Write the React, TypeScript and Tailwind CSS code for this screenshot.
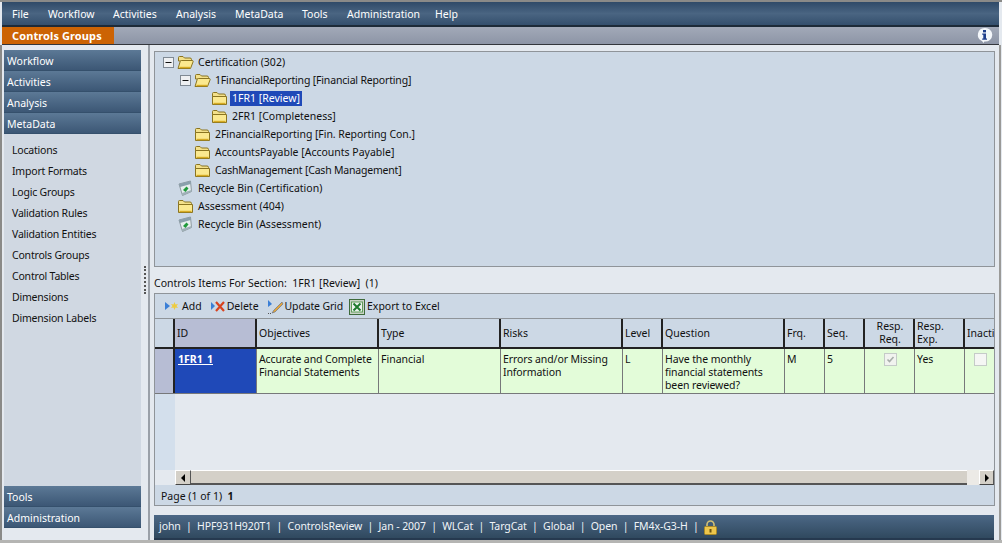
import React from "react";

const Folder = ({ open }: { open?: boolean }) => (
  <svg width="17" height="15" viewBox="0 0 17 15" className="shrink-0">
    <path d="M1.5 5V2.5Q1.5 1.5 2.5 1.5H6L7.5 3H13Q14.5 3 14.5 4.5V6H1.5Z" fill="#f3e08a" stroke="#8a7420" />
    <path d={open ? "M1 13.5H13.5L16.2 6.5Q16.3 5.5 15 5.5H4.5Q3.5 5.5 3.2 6.5Z" : "M1.5 13.5H15.5V5.5H1.5Z"} fill="#fbe98f" stroke="#8a7420" />
    <path d={open ? "M2.5 12.5H13" : "M2.5 12.5H14.5"} stroke="#d7ab23" strokeWidth="1.4" />
  </svg>
);

const Minus = () => (
  <svg width="11" height="11" viewBox="0 0 11 11" className="shrink-0">
    <rect x=".5" y=".5" width="10" height="10" fill="#eef0f2" stroke="#808a94" />
    <path d="M2.5 5.5H8.5" stroke="#111" />
  </svg>
);

const Bin = () => (
  <svg width="15" height="16" viewBox="0 0 15 16" className="shrink-0">
    <path d="M1 4L12.5 1L13.5 11.5L4.5 15.5L1 4Z" fill="#e6eeee" stroke="#8d99a0" />
    <path d="M1 4L12.5 1L12.8 4L2 7Z" fill="#8aa0ac" />
    <path d="M4.5 15.5L13.5 11.5V10L4 13Z" fill="#9fb0b8" />
    <path d="M5 10L8.5 6.5L10.5 8.5L7.5 12Z" fill="#1f9a3a" />
  </svg>
);

const TreeRow = ({ depth, icon, text, minus, selected, cls = "" }: { depth: string; icon: React.ReactNode; text: string; minus?: boolean; selected?: boolean; cls?: string }) => (
  <div className={`h-[18px] flex items-center ${depth}`}>
    <div className="w-[14px] flex items-center">{minus && <Minus />}</div>
    <div className="w-[17px] flex justify-center">{icon}</div>
    <span className={`ml-[2px] px-[2px] h-[15px] leading-[15px] ${cls} ${selected ? "bg-[#1f49b8] text-white" : ""}`}>{text}</span>
  </div>
);

const SideHead = ({ t }: { t: string }) => (
  <div className="h-[21px] leading-[21px] pl-[3px] pt-[1px] text-white bg-gradient-to-b from-[#5c7996] to-[#3c5775] border-b border-[#35506c]">{t}</div>
);

const cols = [
  { t: "ID", w: "w-[82px]", cls: "bg-[#b7bdd4]" },
  { t: "Objectives", w: "w-[122px]" },
  { t: "Type", w: "w-[122px]" },
  { t: "Risks", w: "w-[122px]" },
  { t: "Level", w: "w-[40px]" },
  { t: "Question", w: "w-[122px]" },
  { t: "Frq.", w: "w-[40px]" },
  { t: "Seq.", w: "w-[40px]" },
  { t: "Resp.\nReq.", w: "w-[50px]", center: true },
  { t: "Resp.\nExp.", w: "w-[50px]" },
  { t: "Inacti", w: "w-[29px]" },
];

const Cell = ({ w, children, cls = "" }: { w: string; children?: React.ReactNode; cls?: string }) => (
  <div className={`${w} shrink-0 border-r border-[#77787a] pl-[2px] pt-[4px] leading-[13px] overflow-hidden ${cls}`}>{children}</div>
);

export default function App() {
  const menu: [string, string][] = [["File", "w-[36px]"], ["Workflow", "w-[65px]"], ["Activities", "w-[63px]"], ["Analysis", "w-[59px]"], ["MetaData", "w-[67px]"], ["Tools", "w-[45px]"], ["Administration", "w-[88px]"], ["Help", "w-[40px]"]];
  const links = ["Locations", "Import Formats", "Logic Groups", "Validation Rules", "Validation Entities", "Controls Groups", "Control Tables", "Dimensions", "Dimension Labels"];
  const status = ["john", "HPF931H920T1", "ControlsReview", "Jan - 2007", "WLCat", "TargCat", "Global", "Open", "FM4x-G3-H"];
  return (
    <div className="w-[1002px] h-[543px] overflow-hidden bg-[#e4e9ef] text-[#111] text-[10.5px] flex flex-col" style={{ fontFamily: '"Noto Sans", "DejaVu Sans", sans-serif' }}>
      <div className="h-[2px] bg-[#8a8a88] shrink-0" />
      <div className="h-[25px] ml-[2px] mr-[3px] shrink-0 flex items-center pl-[10px] pt-[3px] text-white bg-gradient-to-b from-[#2f4a68] via-[#4a6582] to-[#344f6d] border-b-2 border-[#1d2a38]">
        {menu.map(([m, w]) => <div key={m} className={w}>{m}</div>)}
      </div>
      <div className="h-[18px] ml-[2px] mr-[3px] shrink-0 flex justify-between bg-gradient-to-b from-[#a2a9b8] to-[#8d95a6] border-b border-[#33363c]">
        <div className="w-[112px] bg-[#cc6304] text-white font-bold text-[11px] tracking-[0.1px] pl-[10px] leading-[17px]">Controls Groups</div>
        <svg width="17" height="17" viewBox="0 0 17 17" className="mr-[6px]">
          <path d="M8.5 1A7 6.8 0 1 1 8.4 14.5L7.5 16L6 14A7 6.8 0 0 1 8.5 1Z" fill="#f4f7fb" />
          <rect x="7" y="3" width="3" height="2.4" fill="#1f3f8c" />
          <path d="M6.2 6.5H10V11.5H11V12.8H6.2V11.5H7.3V7.8H6.2Z" fill="#1f3f8c" />
        </svg>
      </div>
      <div className="h-[495px] shrink-0 flex border-l-2 border-[#8a8a88] border-r-2 border-r-[#9a9a98] mr-[1px]">
        <div className="w-[139px] shrink-0 pl-[2px] pt-[5px] pb-[12px]">
          <div className="bg-[#d0d8e2] h-full flex flex-col">
            <SideHead t="Workflow" /><SideHead t="Activities" /><SideHead t="Analysis" /><SideHead t="MetaData" />
            <div className="flex-1 pl-[8px] pt-[6px] tracking-[-0.2px]">
              {links.map(l => <div key={l} className="h-[21px] leading-[21px]">{l}</div>)}
            </div>
            <SideHead t="Tools" /><SideHead t="Administration" />
          </div>
        </div>
        <div className="w-[7px] shrink-0 flex items-center justify-center bg-[#e4e9ef]">
          <div className="h-[28px] w-[2px] mt-[-26px] border-l-2 border-dotted border-[#555]" />
        </div>
        <div className="w-[2px] bg-[#9aa0a8] shrink-0" />
        <div className="flex-1 min-w-0 pl-[4px] pt-[6px] flex flex-col">
          <div className="h-[216px] w-[841px] shrink-0 bg-[#ccd8e5] border border-[#8f9499] pl-[8px] pt-[1px]">
            <TreeRow depth="" minus icon={<Folder open />} text="Certification (302)" />
            <TreeRow depth="pl-[17px]" minus icon={<Folder open />} text="1FinancialReporting [Financial Reporting]" cls="tracking-[-0.17px]" />
            <TreeRow depth="pl-[34px]" icon={<Folder />} text="1FR1 [Review]" selected />
            <TreeRow depth="pl-[34px]" icon={<Folder />} text="2FR1 [Completeness]" />
            <TreeRow depth="pl-[17px]" icon={<Folder />} text="2FinancialReporting [Fin. Reporting Con.]" cls="tracking-[-0.06px]" />
            <TreeRow depth="pl-[17px]" icon={<Folder />} text="AccountsPayable [Accounts Payable]" />
            <TreeRow depth="pl-[17px]" icon={<Folder />} text="CashManagement [Cash Management]" cls="tracking-[-0.2px]" />
            <TreeRow depth="" icon={<Bin />} text="Recycle Bin (Certification)" />
            <TreeRow depth="" icon={<Folder />} text="Assessment (404)" />
            <TreeRow depth="" icon={<Bin />} text="Recycle Bin (Assessment)" />
          </div>
          <div className="h-[26px] shrink-0 pt-[9px] leading-[14px] whitespace-pre">Controls Items For Section:  1FR1 [Review]  (1)</div>
          <div className="h-[213px] w-[841px] shrink-0 border border-[#8f9499] bg-[#e4e9ef] flex flex-col">
            <div className="h-[24px] shrink-0 bg-[#ccd8e5] flex items-center pl-[9px] pt-[2px] text-[#111]">
              <svg width="18" height="14" viewBox="0 0 18 14"><path d="M1 2L6 6L1 10Z" fill="#3b7fd6" /><path d="M10.5 2L11.5 4.5L14 4L12.5 6L14 8L11.5 7.5L10.5 10L9.5 7.5L7 8L8.5 6L7 4L9.5 4.5Z" fill="#eecb3e" /></svg>
              <span className="mr-[8px]">Add</span>
              <svg width="17" height="14" viewBox="0 0 17 14"><path d="M1 2L5 6L1 10Z" fill="#3b7fd6" /><path d="M6 2L14 11M14 2L6 11" stroke="#d8431f" strokeWidth="2.2" /></svg>
              <span className="mr-[8px]">Delete</span>
              <svg width="18" height="16" viewBox="0 0 18 16"><path d="M1 1L5 5L1 8Z" fill="#3b7fd6" /><path d="M15 3L7 11L5 14L8 13L16 5Z" fill="#e5a53c" stroke="#5b6a80" strokeWidth=".6" /><path d="M1 14.5H4" stroke="#555" strokeDasharray="1 1" /></svg>
              <span className="mr-[6px] tracking-[-0.15px]">Update Grid</span>
              <svg width="16" height="16" viewBox="0 0 16 16"><rect x=".5" y=".5" width="15" height="15" fill="#c9d2c6" stroke="#3e6a3a" /><rect x="2.5" y="3" width="11" height="10" fill="#eef3ee" stroke="#5f9c58" /><path d="M4.5 4.5L11.5 11.5M11.5 4.5L4.5 11.5" stroke="#1f7a2e" strokeWidth="2" /></svg>
              <span className="ml-[2px]">Export to Excel</span>
            </div>
            <div className="h-[31px] shrink-0 flex border-t border-[#8f9499] border-b-2 border-b-[#222] bg-[#ccd8e5]">
              <div className="w-[20px] shrink-0 border-r-2 border-[#222]" />
              {cols.map(c => (
                <div key={c.t} className={`${c.w} shrink-0 flex items-center border-r-2 border-[#222] last:border-r-0 pl-[2px] leading-[13px] overflow-hidden whitespace-pre ${c.center ? "justify-center text-center" : ""} ${c.cls ?? ""}`}>{c.t}</div>
              ))}
            </div>
            <div className="h-[45px] shrink-0 flex bg-[#e3fcd9] border-b border-[#77787a]">
              <div className="w-[20px] shrink-0 bg-[#b7bdd4] border-r-2 border-[#222]" />
              <Cell w="w-[82px]" cls="bg-[#1f49b8] text-white font-bold underline pl-[3px]">1FR1_1</Cell>
              <Cell w="w-[122px]" cls="tracking-[-0.1px]">Accurate and Complete Financial Statements</Cell>
              <Cell w="w-[122px]">Financial</Cell>
              <Cell w="w-[122px]" cls="tracking-[-0.1px]">Errors and/or Missing Information</Cell>
              <Cell w="w-[40px]">L</Cell>
              <Cell w="w-[122px]" cls="tracking-[-0.1px]">Have the monthly financial statements been reviewed?</Cell>
              <Cell w="w-[40px]">M</Cell>
              <Cell w="w-[40px]">5</Cell>
              <Cell w="w-[50px]" cls="flex justify-center">
                <svg width="13" height="13" viewBox="0 0 13 13"><rect x=".5" y=".5" width="12" height="12" fill="#f1f3ef" stroke="#c5cbc8" /><path d="M3.5 6.5L5.5 8.5L9.5 4" stroke="#a8aeaa" strokeWidth="1.6" fill="none" /></svg>
              </Cell>
              <Cell w="w-[50px]">Yes</Cell>
              <Cell w="w-[29px]" cls="border-r-0 flex justify-center">
                <svg width="13" height="13" viewBox="0 0 13 13"><rect x=".5" y=".5" width="12" height="12" fill="#f5f6f4" stroke="#c5cbc8" /></svg>
              </Cell>
            </div>
            <div className="flex-1 flex min-h-0">
              <div className="w-[20px] bg-[#d3dfec]" />
              <div className="flex-1" />
            </div>
            <div className="h-[15px] shrink-0 flex items-stretch pl-[20px] bg-[#e4e9ef]">
              <div className="w-[16px] flex items-center justify-center bg-[#d4d0c8] border border-[#fff] border-r-[#555] border-b-[#444]"><div className="border-y-[4px] border-y-transparent border-r-[4px] border-r-black" /></div>
              <div className="flex-1 bg-[#d4d0c8] border-t border-white border-b-2 border-b-[#555]" />
              <div className="w-[12px] bg-[#eceae6]" />
              <div className="w-[15px] flex items-center justify-center bg-[#d4d0c8] border border-[#fff] border-r-[#555] border-b-[#444]"><div className="border-y-[4px] border-y-transparent border-l-[4px] border-l-black" /></div>
            </div>
            <div className="h-[20px] shrink-0 bg-[#ccd8e5] pl-[6px] pt-[1px] leading-[20px]">Page (1 of 1)&nbsp; <b>1</b></div>
          </div>
          <div className="h-[9px] shrink-0" />
          <div className="h-[25px] w-[840px] shrink-0 flex items-center pl-[5px] pt-[1px] text-[#f0f4f8] tracking-[-0.08px] bg-gradient-to-b from-[#4c6886] to-[#30495f] border-b-2 border-[#26394f] whitespace-pre">
            {status.join("  |  ")}  |  
            <svg width="15" height="15" viewBox="0 0 15 15" className="ml-[4px]"><path d="M4 7V4.5A3.5 3.5 0 0 1 11 4.5V7" fill="none" stroke="#d2c074" strokeWidth="1.6" /><rect x="1.5" y="6.5" width="12" height="8" rx="1" fill="#edc64c" stroke="#a98a28" /><rect x="6.5" y="9" width="2" height="3.5" fill="#6b5413" /></svg>
          </div>
        </div>
      </div>
      <div className="flex-1 bg-[#b5b5b3]" />
    </div>
  );
}
